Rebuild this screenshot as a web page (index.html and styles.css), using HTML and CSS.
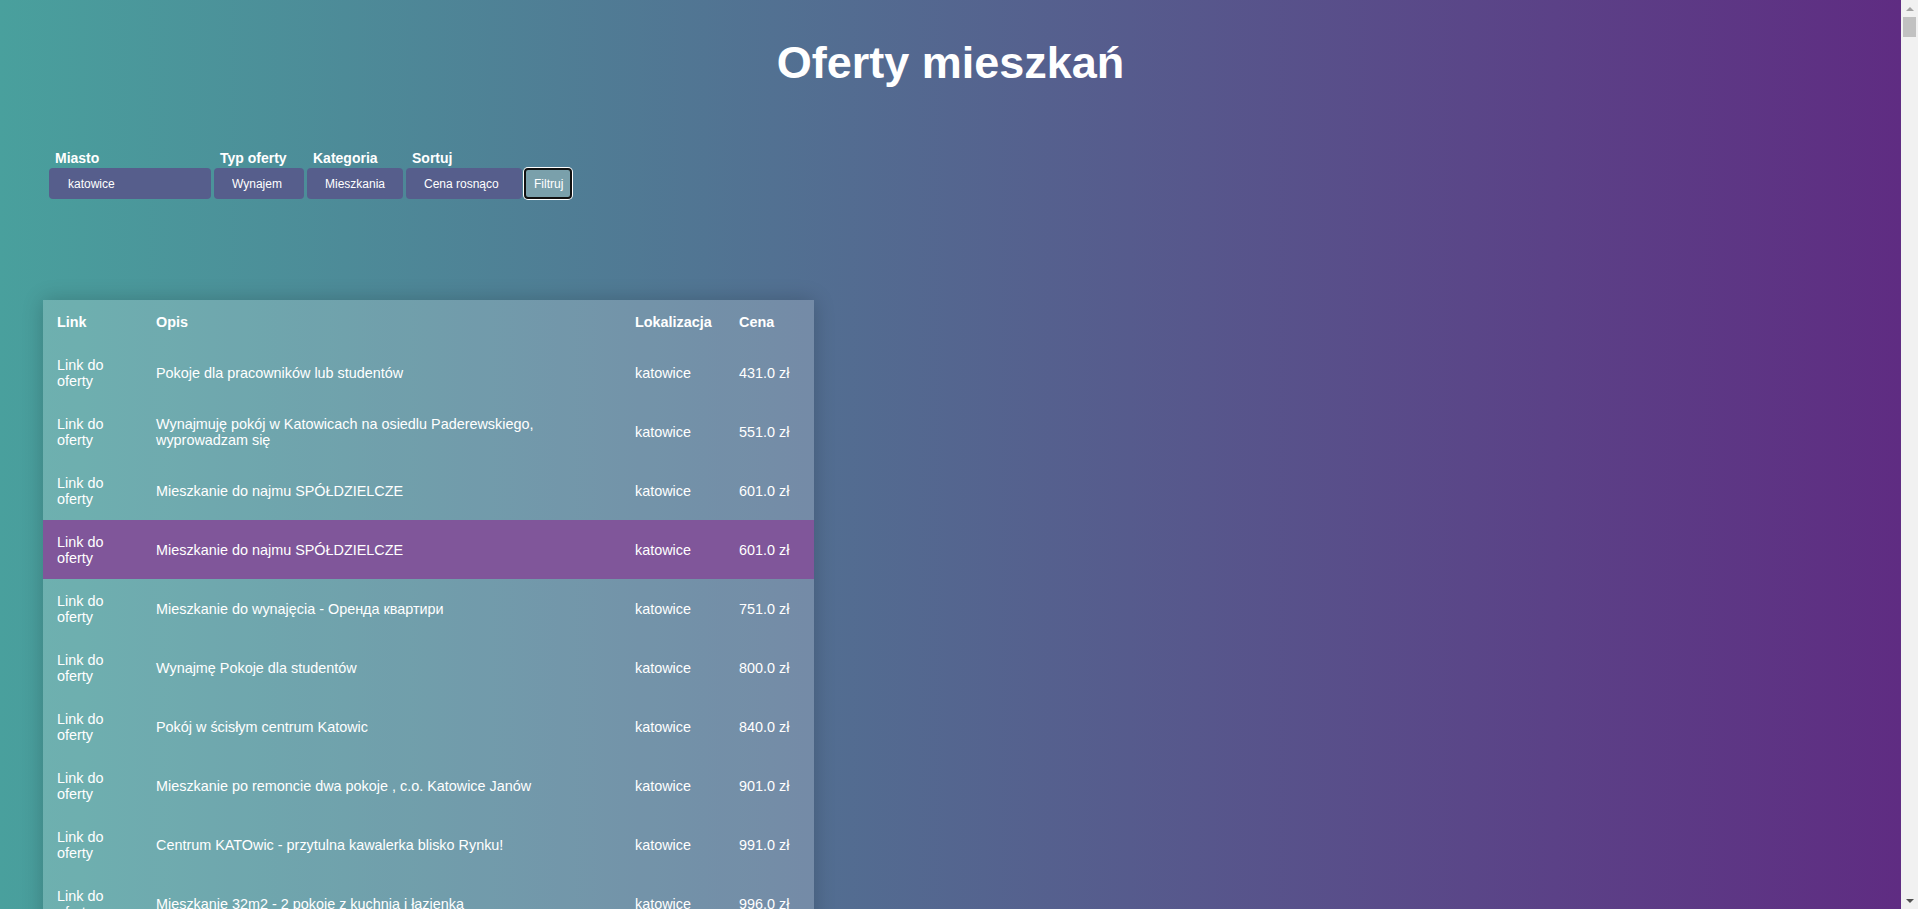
FILE: index.html
```html
<!DOCTYPE html>
<html lang="pl">
<head>
<meta charset="utf-8">
<title>Oferty mieszkań</title>
<link rel="stylesheet" href="styles.css">
</head>
<body>
<div class="page">
  <header class="page-header">
    <h1 class="page-title">Oferty mieszkań</h1>
  </header>
  <main class="content">
    <form class="filters">
      <div class="field">
        <label class="field-label" for="miasto">Miasto</label>
        <input class="control control-city" id="miasto" type="text" value="katowice">
      </div>
      <div class="field">
        <label class="field-label" for="typ">Typ oferty</label>
        <select class="control control-type" id="typ"><option>Wynajem</option><option>Sprzedaż</option></select>
      </div>
      <div class="field">
        <label class="field-label" for="kat">Kategoria</label>
        <select class="control control-cat" id="kat"><option>Mieszkania</option><option>Domy</option></select>
      </div>
      <div class="field">
        <label class="field-label" for="sort">Sortuj</label>
        <select class="control control-sort" id="sort"><option>Cena rosnąco</option><option>Cena malejąco</option></select>
      </div>
      <button class="filter-btn" type="button">Filtruj</button>
    </form>

    <table class="offers">
      <colgroup>
        <col class="c-link"><col class="c-desc"><col class="c-loc"><col class="c-price">
      </colgroup>
      <thead>
        <tr><th>Link</th><th>Opis</th><th>Lokalizacja</th><th>Cena</th></tr>
      </thead>
      <tbody>
        <tr><td><a href="#">Link do oferty</a></td><td>Pokoje dla pracowników lub studentów</td><td>katowice</td><td>431.0 zł</td></tr>
        <tr><td><a href="#">Link do oferty</a></td><td>Wynajmuję pokój w Katowicach na osiedlu Paderewskiego, wyprowadzam się</td><td>katowice</td><td>551.0 zł</td></tr>
        <tr><td><a href="#">Link do oferty</a></td><td>Mieszkanie do najmu SPÓŁDZIELCZE</td><td>katowice</td><td>601.0 zł</td></tr>
        <tr class="is-active"><td><a href="#">Link do oferty</a></td><td>Mieszkanie do najmu SPÓŁDZIELCZE</td><td>katowice</td><td>601.0 zł</td></tr>
        <tr><td><a href="#">Link do oferty</a></td><td>Mieszkanie do wynajęcia - Оренда квартири</td><td>katowice</td><td>751.0 zł</td></tr>
        <tr><td><a href="#">Link do oferty</a></td><td>Wynajmę Pokoje dla studentów</td><td>katowice</td><td>800.0 zł</td></tr>
        <tr><td><a href="#">Link do oferty</a></td><td>Pokój w ścisłym centrum Katowic</td><td>katowice</td><td>840.0 zł</td></tr>
        <tr><td><a href="#">Link do oferty</a></td><td>Mieszkanie po remoncie dwa pokoje , c.o. Katowice Janów</td><td>katowice</td><td>901.0 zł</td></tr>
        <tr><td><a href="#">Link do oferty</a></td><td>Centrum KATOwic - przytulna kawalerka blisko Rynku!</td><td>katowice</td><td>991.0 zł</td></tr>
        <tr><td><a href="#">Link do oferty</a></td><td>Mieszkanie 32m2 - 2 pokoje z kuchnią i łazienką</td><td>katowice</td><td>996.0 zł</td></tr>
        <tr><td><a href="#">Link do oferty</a></td><td>Mieszkanie do wynajęcia</td><td>katowice</td><td>1000.0 zł</td></tr>
        <tr><td><a href="#">Link do oferty</a></td><td>Kawalerka w centrum</td><td>katowice</td><td>1000.0 zł</td></tr>
        <tr><td><a href="#">Link do oferty</a></td><td>Pokój do wynajęcia</td><td>katowice</td><td>1050.0 zł</td></tr>
        <tr><td><a href="#">Link do oferty</a></td><td>Mieszkanie dwupokojowe</td><td>katowice</td><td>1100.0 zł</td></tr>
      </tbody>
    </table>
  </main>
</div>
<div class="rail" aria-hidden="true">
  <div class="rail-btn"><span class="arrow-up"></span></div>
  <div class="rail-thumb"></div>
  <div class="rail-track"></div>
  <div class="rail-btn"><span class="arrow-down"></span></div>
</div>
</body>
</html>
```

FILE: styles.css
```css
html,
body {
  margin: 0;
  padding: 0;
  height: 100%;
  overflow: hidden;
}

body {
  display: flex;
  font-family: "Liberation Sans", Arial, sans-serif;
  color: #fff;
}

.page {
  flex: 1;
  min-width: 0;
  overflow-y: auto;
  background: linear-gradient(to right, #49a09d, #5f2c82);
}

/* decorative classic scrollbar rail */
.rail {
  flex: none;
  width: 17px;
  display: flex;
  flex-direction: column;
  background: #f1f1f1;
}

.rail-btn {
  height: 17px;
  display: flex;
  align-items: center;
  justify-content: center;
}

.arrow-up,
.arrow-down {
  width: 0;
  height: 0;
  border-left: 4px solid transparent;
  border-right: 4px solid transparent;
}

.arrow-up {
  border-bottom: 4px solid #a3a3a3;
}

.arrow-down {
  border-top: 4px solid #505050;
}

.rail-thumb {
  height: 20px;
  margin: 0 2px;
  background: #c1c1c1;
}

.rail-track {
  flex: 1;
}

.page-header {
  padding-top: 37px;
}

.page-title {
  margin: 0;
  text-align: center;
  font-size: 45px;
  font-weight: bold;
  line-height: 52px;
}

.content {
  padding: 61px 43px 60px;
}

.filters {
  display: flex;
  align-items: flex-end;
  gap: 3px;
  margin: 0 0 0 6px;
}

.field {
  display: flex;
  flex-direction: column;
  gap: 2px;
}

.field-label {
  font-size: 14px;
  font-weight: bold;
  line-height: 16px;
  padding-left: 6px;
}

.control {
  box-sizing: border-box;
  height: 31px;
  border: none;
  border-radius: 4px;
  background: #565e8c;
  color: #fff;
  font-family: "Liberation Sans", Arial, sans-serif;
  font-size: 12px;
  padding: 0 0 0 18px;
  -webkit-appearance: none;
  appearance: none;
  outline: none;
}

.control-city { width: 162px; padding-left: 19px; }
.control-type { width: 90px; }
.control-cat { width: 96px; }
.control-sort { width: 116px; }

.filter-btn {
  box-sizing: border-box;
  height: 31px;
  width: 48px;
  margin-left: -1px;
  padding: 0 8px;
  border: 2px solid #111;
  border-radius: 4px;
  box-shadow: 0 0 0 1px #fff;
  background: #7aa0ab;
  color: #fff;
  font-family: "Liberation Sans", Arial, sans-serif;
  font-size: 12px;
}

.offers {
  margin-top: 101px;
  width: 771px;
  table-layout: fixed;
  border-collapse: collapse;
  background: rgba(255, 255, 255, 0.2);
  box-shadow: 0 0 20px rgba(0, 0, 0, 0.2);
  font-size: 14.4px;
  line-height: 16px;
}

.c-link { width: 99px; }
.c-desc { width: 479px; }
.c-loc { width: 104px; }
.c-price { width: 89px; }

.offers th,
.offers td {
  text-align: left;
  vertical-align: middle;
  padding: 14px 14px 13px;
}

.offers th {
  font-weight: bold;
}

.offers a {
  color: #fff;
  text-decoration: none;
}

.offers tr.is-active {
  background: #80569a;
}
```
